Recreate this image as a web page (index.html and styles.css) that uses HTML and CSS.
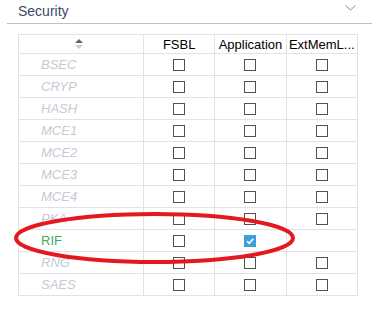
FILE: index.html
```html
<!DOCTYPE html>
<html lang="en">
<head>
  <meta charset="UTF-8">
  <title>Security</title>
  <link rel="stylesheet" href="styles.css">
</head>
<body>
  <div class="painel">
    <div class="titulo">
      <span>Security</span>
      <svg class="seta" width="11" height="6" viewBox="0 0 11 6"><path d="M0.5 0.5 L5.5 5 L10.5 0.5" fill="none" stroke="#8a8a8a" stroke-width="1"/></svg>
    </div>

    <div class="tabela-area">
      <table class="tabela">
        <thead>
          <tr>
            <th class="col-nome">
              <svg class="ordem" width="8" height="10" viewBox="0 0 8 10"><path d="M4 0 L8 4 L0 4 Z" fill="#666"/><path d="M0 6 L8 6 L4 10 Z" fill="#ccc"/></svg>
            </th>
            <th>FSBL</th>
            <th>Application</th>
            <th class="corta">ExtMemL...</th>
          </tr>
        </thead>
        <tbody>
          <tr><td class="nome">BSEC</td><td><span class="caixa"></span></td><td><span class="caixa"></span></td><td><span class="caixa"></span></td></tr>
          <tr><td class="nome">CRYP</td><td><span class="caixa"></span></td><td><span class="caixa"></span></td><td><span class="caixa"></span></td></tr>
          <tr><td class="nome">HASH</td><td><span class="caixa"></span></td><td><span class="caixa"></span></td><td><span class="caixa"></span></td></tr>
          <tr><td class="nome">MCE1</td><td><span class="caixa"></span></td><td><span class="caixa"></span></td><td><span class="caixa"></span></td></tr>
          <tr><td class="nome">MCE2</td><td><span class="caixa"></span></td><td><span class="caixa"></span></td><td><span class="caixa"></span></td></tr>
          <tr><td class="nome">MCE3</td><td><span class="caixa"></span></td><td><span class="caixa"></span></td><td><span class="caixa"></span></td></tr>
          <tr><td class="nome">MCE4</td><td><span class="caixa"></span></td><td><span class="caixa"></span></td><td><span class="caixa"></span></td></tr>
          <tr><td class="nome">PKA</td><td><span class="caixa"></span></td><td><span class="caixa"></span></td><td><span class="caixa"></span></td></tr>
          <tr><td class="nome ativo">RIF</td><td><span class="caixa"></span></td><td><span class="caixa marcada"><svg width="12" height="12" viewBox="0 0 12 12"><path d="M3 6.2 L5.2 8.4 L9.3 3.8" fill="none" stroke="#fff" stroke-width="1.6"/></svg></span></td><td class="vazio"></td></tr>
          <tr><td class="nome">RNG</td><td><span class="caixa"></span></td><td><span class="caixa"></span></td><td><span class="caixa"></span></td></tr>
          <tr><td class="nome">SAES</td><td><span class="caixa"></span></td><td><span class="caixa"></span></td><td><span class="caixa"></span></td></tr>
        </tbody>
      </table>

      <!-- marcação em vermelho por cima da linha RIF -->
      <svg class="destaque" width="372" height="310" viewBox="0 0 372 310">
        <ellipse cx="154.5" cy="238" rx="138.5" ry="24" fill="none" stroke="#e3191f" stroke-width="4"/>
      </svg>
    </div>
  </div>
</body>
</html>
```

FILE: styles.css
```css
* {
  box-sizing: border-box;
  margin: 0;
  padding: 0;
}

body {
  font-family: 'Liberation Sans', Arial, sans-serif;
  background: #fff;
  color: #000;
  width: 372px;
  height: 310px;
  overflow: hidden;
}

.painel {
  position: relative;
  width: 372px;
  height: 310px;
}

.titulo {
  display: flex;
  justify-content: space-between;
  align-items: center;
  margin-left: 7px;
  height: 24px;
  padding: 0 16px 2px 11px;
  border-bottom: 1px solid #bcc0c6;
  font-size: 14px;
  color: #3b4a6a;
}

.seta {
  margin-top: -6px;
}

.tabela-area {
  padding: 10px 0 0 18px;
}

.tabela {
  border-collapse: collapse;
  table-layout: fixed;
  width: 340px;
  font-size: 13px;
}

.tabela th,
.tabela td {
  border: 1px solid #e2e2e4;
  text-align: center;
  vertical-align: middle;
  padding: 0 2px;
}

.tabela th {
  height: 19px;
  font-weight: normal;
  color: #000;
  white-space: nowrap;
  overflow: hidden;
}

.tabela td {
  height: 22px;
}

.col-nome {
  width: 125px;
}

.ordem {
  display: block;
  margin: 0 auto;
  position: relative;
  left: -2px;
}

.corta {
  text-overflow: ellipsis;
}

.tabela td.nome {
  text-align: left;
  padding-left: 22px;
  font-style: italic;
  color: #c3cbd5;
}

.tabela td.ativo {
  font-style: normal;
  color: #3fa95e;
}

.tabela td.vazio {
  border-left-color: transparent;
}

.caixa {
  display: inline-block;
  width: 12px;
  height: 12px;
  border: 1px solid #505050;
  vertical-align: middle;
  margin-top: -2px;
}

.caixa.marcada {
  border: none;
  background: #3ba0da;
}

.caixa.marcada svg {
  display: block;
}

.destaque {
  position: absolute;
  top: 0;
  left: 0;
  pointer-events: none;
}
```
